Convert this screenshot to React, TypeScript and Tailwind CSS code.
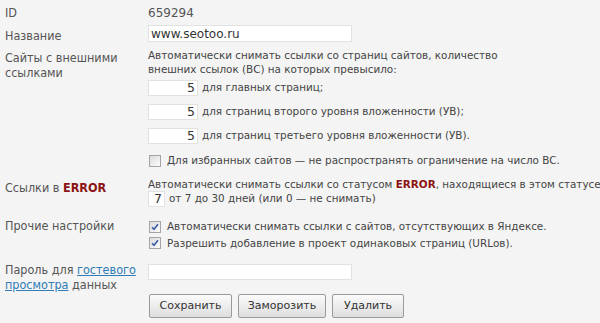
import React from "react";

function Box({ checked }: { checked?: boolean }) {
  return (
    <span className="inline-flex h-[12px] w-[12px] shrink-0 items-center justify-center border border-[#a5a5a5] bg-gradient-to-br from-[#dcdcdc] to-[#fbfbfb]">
      {checked && (
        <svg width="8" height="8" viewBox="0 0 8 8">
          <path d="M1 4.2 L3 6.3 L7 1.2" fill="none" stroke="#3a5ea8" strokeWidth="1.6" />
        </svg>
      )}
    </span>
  );
}

function NumInput({ value, w }: { value: string; w: string }) {
  return (
    <span className={`inline-flex h-[16px] items-center justify-end border border-[#e2e2e2] bg-white pr-[2px] text-[12.5px] text-[#333] ${w}`}>
      {value}
    </span>
  );
}

function Label({ children, className = "" }: { children: React.ReactNode; className?: string }) {
  return (
    <div
      className={`w-[148px] shrink-0 whitespace-nowrap pl-[5px] text-[12.5px] leading-[15px] text-[#555] [font-family:'DejaVu_Sans_Condensed','DejaVu_Sans',sans-serif] ${className}`}
    >
      {children}
    </div>
  );
}

export default function App() {
  return (
    <div className="h-[323px] w-[600px] overflow-hidden bg-[#f4f4f4] text-[#444] [font-family:'DejaVu_Sans',Verdana,sans-serif]">
      <div className="flex pt-[5px]">
        <Label className="leading-[16px]">ID</Label>
        <div className="text-[12px] leading-[16px] text-[#555]">659294</div>
      </div>

      <div className="mt-[4px] flex">
        <Label className="pt-[3px]">Название</Label>
        <div className="flex h-[17px] w-[204px] items-center border border-[#e2e2e2] bg-white pl-[2px] text-[12px] text-[#333]">
          www.seotoo.ru
        </div>
      </div>

      <div className="mt-[6px] flex">
        <Label className="pt-[1px]">
          Сайты с внешними
          <br />
          ссылками
        </Label>
        <div className="flex-1 text-[10.4px] leading-[13.5px]">
          <div className="whitespace-nowrap">Автоматически снимать ссылки со страниц сайтов, количество</div>
          <div className="whitespace-nowrap">внешних ссылок (ВС) на которых превысило:</div>
          <div className="mt-[4px] flex flex-col gap-[8px]">
            <div className="flex items-center gap-[4px]">
              <NumInput value="5" w="w-[50px]" />
              <span>для главных страниц;</span>
            </div>
            <div className="flex items-center gap-[4px]">
              <NumInput value="5" w="w-[50px]" />
              <span>для страниц второго уровня вложенности (УВ);</span>
            </div>
            <div className="flex items-center gap-[4px]">
              <NumInput value="5" w="w-[50px]" />
              <span>для страниц третьего уровня вложенности (УВ).</span>
            </div>
            <div className="mt-[2px] flex items-center gap-[6px] pl-[1px]">
              <Box />
              <span>Для избранных сайтов — не распространять ограничение на число ВС.</span>
            </div>
          </div>
        </div>
      </div>

      <div className="mt-[10px] flex">
        <Label className="pt-[2px]">
          Ссылки в <b className="text-[#8b1414]">ERROR</b>
        </Label>
        <div className="flex-1 overflow-hidden text-[10.4px] leading-[13.5px]">
          <div className="whitespace-nowrap">
            Автоматически снимать ссылки со статусом <b className="text-[#8b1414]">ERROR</b>, находящиеся в этом статусе
          </div>
          <div className="flex items-center gap-[4px]">
            <NumInput value="7" w="w-[17px]" />
            <span>от 7 до 30 дней (или 0 — не снимать)</span>
          </div>
        </div>
      </div>

      <div className="mt-[11px] flex">
        <Label>Прочие настройки</Label>
        <div className="flex flex-1 flex-col gap-[3px] pt-[2px] text-[10.4px] leading-[13.5px]">
          <div className="flex items-center gap-[6px] pl-[1px]">
            <Box checked />
            <span>Автоматически снимать ссылки с сайтов, отсутствующих в Яндексе.</span>
          </div>
          <div className="flex items-center gap-[6px] pl-[1px]">
            <Box checked />
            <span>Разрешить добавление в проект одинаковых страниц (URLов).</span>
          </div>
        </div>
      </div>

      <div className="mt-[12px] flex">
        <Label>
          Пароль для <span className="text-[#2f7cb6] underline">гостевого</span>
          <br />
          <span className="text-[#2f7cb6] underline">просмотра</span> данных
        </Label>
        <div className="mt-[2px] h-[16px] w-[204px] border border-[#e2e2e2] bg-white" />
      </div>

      <div className="mt-[2px] flex gap-[6px] pl-[149px]">
        {["Сохранить", "Заморозить", "Удалить"].map((t, i) => (
          <button
            key={t}
            className={`h-[24px] rounded-[2px] border border-[#9a9a9a] bg-gradient-to-b from-[#fbfbfb] to-[#dedede] text-[11px] text-[#333] ${
              i === 0 ? "w-[83px]" : i === 1 ? "w-[88px]" : "w-[72px]"
            }`}
          >
            {t}
          </button>
        ))}
      </div>
    </div>
  );
}
